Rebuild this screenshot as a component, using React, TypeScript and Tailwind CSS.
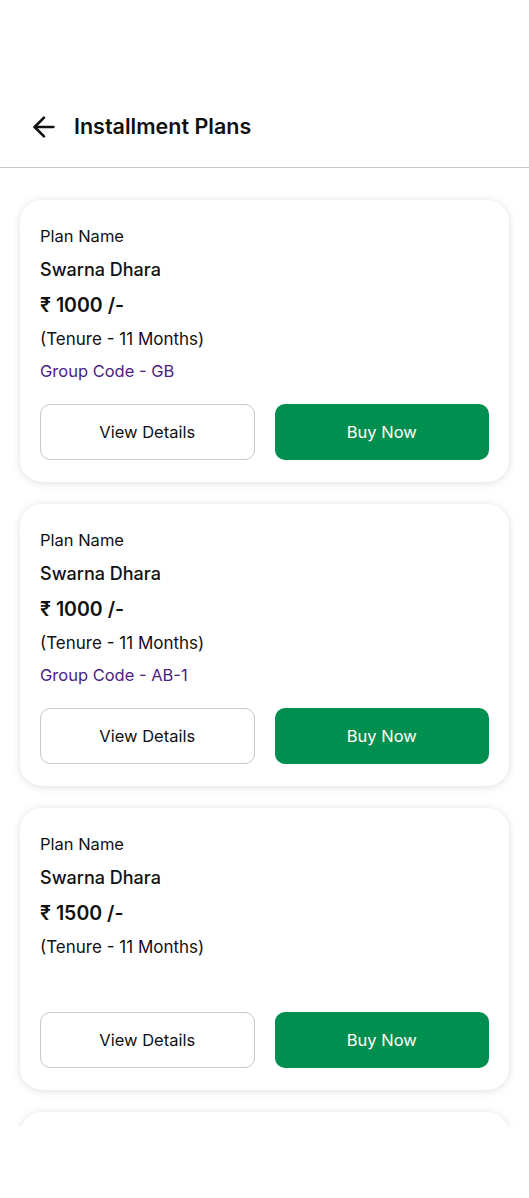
import React from 'react';
import { ArrowLeft } from 'lucide-react';

type Plan = {
    name: string;
    amount: string;
    tenure: string;
    groupCode?: string;
};

const PLANS: Plan[] = [
    { name: 'Swarna Dhara', amount: '1000', tenure: '11 Months', groupCode: 'GB' },
    { name: 'Swarna Dhara', amount: '1000', tenure: '11 Months', groupCode: 'AB-1' },
    { name: 'Swarna Dhara', amount: '1500', tenure: '11 Months' },
];

const PlanCard: React.FC<{ plan: Plan }> = ({ plan }) => (
    <div className="shrink-0 rounded-[22px] bg-white px-5 pt-6 pb-[22px] shadow-[0_1px_8px_rgba(0,0,0,0.13)]">
        <p className="h-6 text-[16.5px] leading-6 text-[#111]">Plan Name</p>
        <p className="mt-[10px] h-6 text-[18px] leading-6 font-medium text-[#111]">{plan.name}</p>
        <p className="mt-[11px] h-6 text-[19.5px] leading-6 font-semibold text-[#111]">₹ {plan.amount} /-</p>
        <p className="mt-[10px] h-6 text-[17px] leading-6 text-[#111]">(Tenure - {plan.tenure})</p>
        <p className="mt-2 h-6 text-[16.5px] leading-6 text-[#4b2384]">
            {plan.groupCode ? `Group Code - ${plan.groupCode}` : ''}
        </p>
        <div className="mt-[21px] grid grid-cols-2 gap-5">
            <button className="h-[56px] rounded-[10px] border border-[#c9c9c9] bg-white text-[16.5px] text-[#111]">
                View Details
            </button>
            <button className="h-[56px] rounded-[10px] bg-[#008f4f] text-[16.5px] text-white">
                Buy Now
            </button>
        </div>
    </div>
);

export default function App() {
    return (
        <div className="h-[1198px] w-full bg-white font-['Inter',sans-serif]">
            {/* Header */}
            <header className="flex h-[168px] items-end border-b border-[#c6c6c6]">
                <div className="flex h-[80px] w-full items-center gap-[14px] px-[28px] pb-[1px]">
                    <ArrowLeft className="h-[32px] w-[32px] text-[#111]" strokeWidth={2} />
                    <h1 className="text-[21.5px] font-semibold text-[#111]">Installment Plans</h1>
                </div>
            </header>

            {/* Plans list, clipped where the scroll area ends */}
            <div className="h-[959px] overflow-hidden">
                <div className="flex flex-col gap-[22px] px-5 pt-[32px]">
                    {PLANS.map((plan, i) => (
                        <PlanCard key={i} plan={plan} />
                    ))}
                    <div className="h-[282px] shrink-0 rounded-[22px] bg-white shadow-[0_1px_8px_rgba(0,0,0,0.13)]" />
                </div>
            </div>
        </div>
    );
}
